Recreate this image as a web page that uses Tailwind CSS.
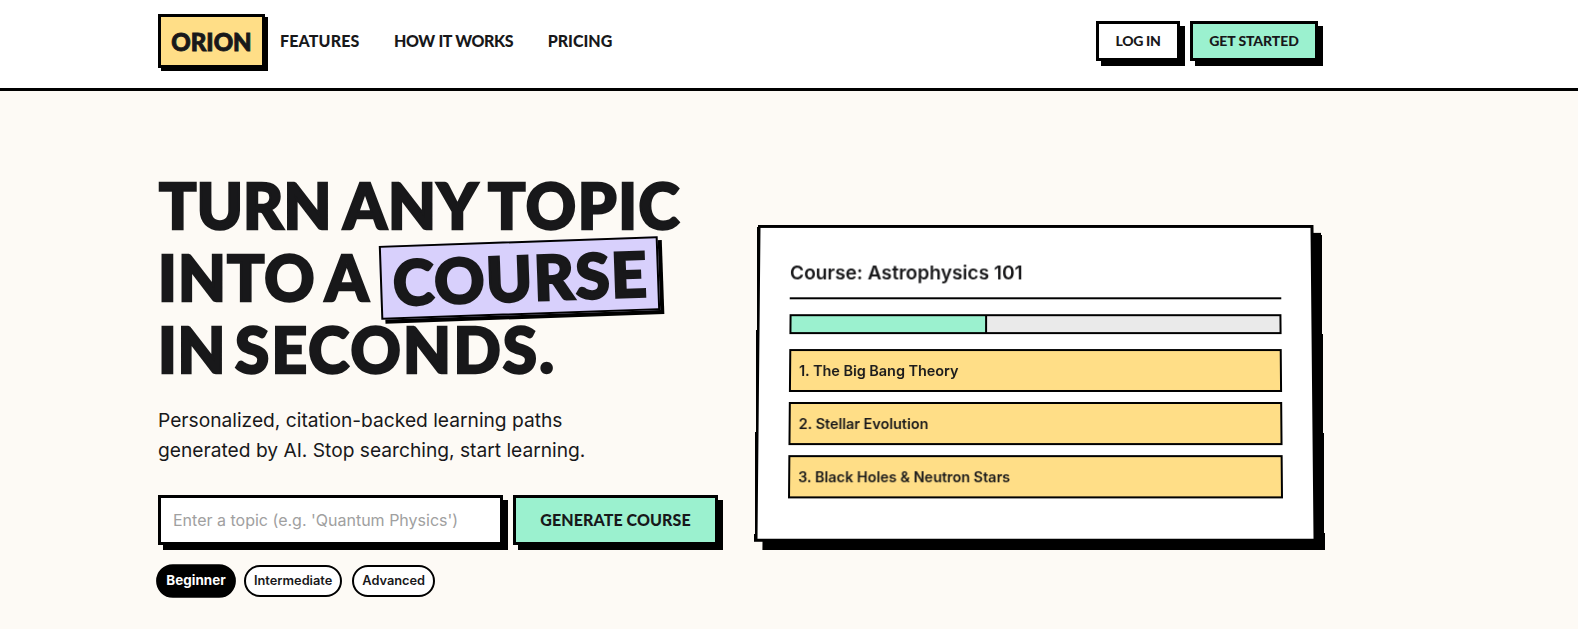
<!DOCTYPE html>
<html lang="en">
<head>
    <meta charset="UTF-8">
    <meta name="viewport" content="width=device-width, initial-scale=1.0">
    <title>Orion - Turn any topic into a course</title>
    <script src="https://cdn.jsdelivr.net/npm/@tailwindcss/browser@4"></script>
</head>
<body class="min-h-screen bg-[#fdfaf5] font-[Inter,sans-serif] text-[#18181a]">
    <header class="h-[91px] bg-white border-b-3 border-black">
        <div class="ml-[158px] w-[1160px] h-[82px] flex items-center justify-between font-[Lato,sans-serif] font-black">
            <div class="flex items-center">
                <a href="#" class="w-[107px] h-[54px] pt-px flex items-center justify-center bg-[#ffde87] border-3 border-black shadow-[3px_3px_0_#000] text-2xl [-webkit-text-stroke:0.9px_#18181a]">ORION</a>
                <nav class="ml-[15px] flex gap-[34.5px] text-base whitespace-nowrap">
                    <a href="#" class="tracking-[0.15px]">FEATURES</a>
                    <a href="#" class="tracking-[-0.4px] [word-spacing:0.2px]">HOW IT WORKS</a>
                    <a href="#">PRICING</a>
                </nav>
            </div>
            <div class="flex gap-2.5 text-sm">
                <button class="w-[84px] h-10 bg-white border-3 border-black shadow-[5px_5px_0_#000] tracking-[-0.3px]">LOG IN</button>
                <button class="w-32 h-10 bg-[#9bf1cf] border-3 border-black shadow-[5px_5px_0_#000] tracking-[-0.1px]">GET STARTED</button>
            </div>
        </div>
    </header>

    <main class="ml-[158px] w-[1160px] pt-[77px] flex items-start">
        <!-- Hero copy -->
        <section class="w-[560px] shrink-0">
            <h1 class="pt-px font-[Lato,sans-serif] font-black text-[62px] leading-[72px] whitespace-nowrap [-webkit-text-stroke:2.4px_#18181a]">
                <span class="h-[72px] pl-px flex">
                    <span class="tracking-[0.2px]">TURN</span>
                    <span class="ml-[11.5px] tracking-[1.2px]">ANY</span>
                    <span class="ml-[9px] tracking-[1.6px]">TOPIC</span>
                </span>
                <span class="h-[72px] flex items-center">
                    <span class="tracking-[1.1px]">INTO</span>
                    <span class="ml-[9.5px]">A</span>
                    <span class="ml-[11.5px] w-[279px] h-[74px] mt-0.5 pl-0.5 pb-0.5 shrink-0 flex items-center justify-center bg-[#d8d0fc] border-2 border-black shadow-[4px_4px_0_#000] -rotate-2 tracking-[1.5px]">COURSE</span>
                </span>
                <span class="h-[72px] flex">
                    <span class="tracking-[0.6px]">IN</span>
                    <span class="ml-[9px] tracking-[2.3px]">SECONDS.</span>
                </span>
            </h1>

            <p class="mt-5 text-[19.2px] leading-[30px] whitespace-nowrap">
                Personalized, citation-backed learning paths<br>
                generated by AI. Stop searching, start learning.
            </p>

            <form class="mt-[30px] flex gap-2.5">
                <input type="text" placeholder="Enter a topic (e.g. 'Quantum Physics')" class="w-[345px] h-[50px] px-3 bg-white border-3 border-black shadow-[5px_5px_0_#000] text-base placeholder:text-[#a0a0a0]">
                <button type="button" class="w-[205px] h-[50px] bg-[#9bf1cf] border-3 border-black shadow-[5px_5px_0_#000] font-[Lato,sans-serif] font-black text-base tracking-[0.1px]">GENERATE COURSE</button>
            </form>

            <div class="mt-5 flex gap-2.5 text-[12.8px] font-semibold">
                <button class="w-[76px] h-8 rounded-full border-2 border-black bg-black text-white font-bold scale-105">Beginner</button>
                <button class="h-8 px-2 rounded-full border-2 border-black bg-white">Intermediate</button>
                <button class="h-8 px-2 rounded-full border-2 border-black bg-white">Advanced</button>
            </div>
        </section>

        <!-- Course preview card -->
        <section class="ml-[37.5px] mt-[55.5px] w-[559px] h-[317px] shrink-0 px-[30px] pt-[31px] bg-white border-3 border-black shadow-[8px_8px_0_#000] [transform:perspective(1000px)_rotateX(2deg)]">
            <h3 class="h-[41px] border-b-2 border-black text-[19.2px] leading-[29px] font-semibold">Course: Astrophysics 101</h3>
            <div class="mt-[15px] h-5 border-2 border-black bg-[#eaeaea]">
                <div class="h-full border-r-2 border-black bg-[#9bf1cf]" style="width: 40%"></div>
            </div>
            <ul class="mt-[15px] flex flex-col gap-2.5 text-[14.4px] font-semibold">
                <li class="h-[43px] px-2 flex items-center bg-[#ffde87] border-2 border-black">1. The Big Bang Theory</li>
                <li class="h-[43px] px-2 flex items-center bg-[#ffde87] border-2 border-black">2. Stellar Evolution</li>
                <li class="h-[43px] px-2 flex items-center bg-[#ffde87] border-2 border-black">3. Black Holes &amp; Neutron Stars</li>
            </ul>
        </section>
    </main>
</body>
</html>
